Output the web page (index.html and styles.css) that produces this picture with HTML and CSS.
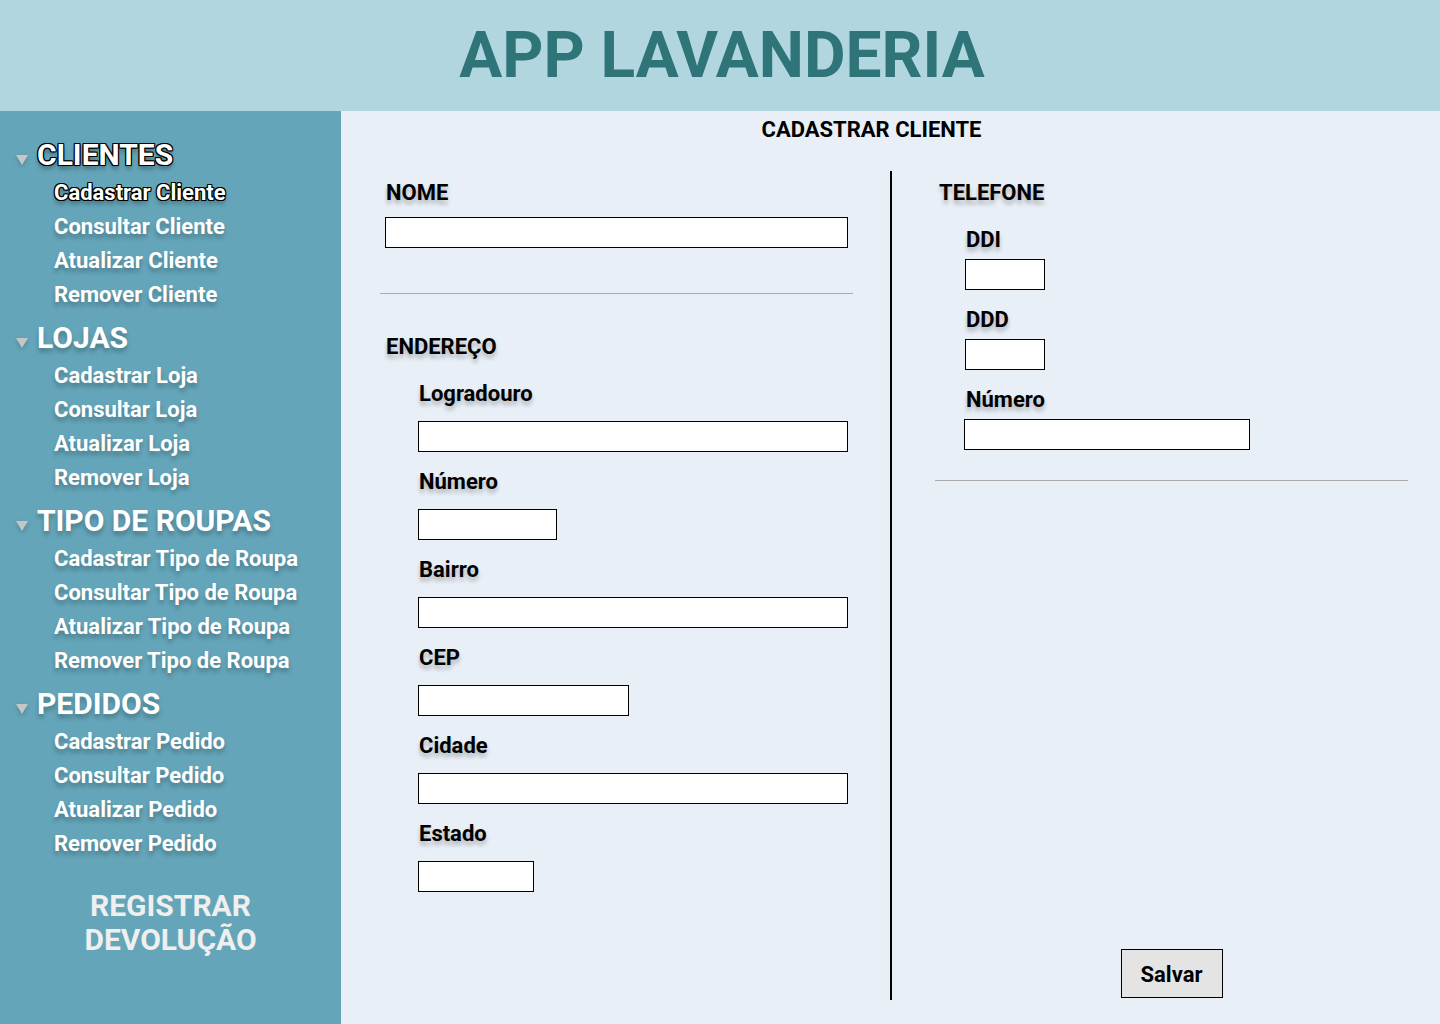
FILE: index.html
```html
<!DOCTYPE html>
<html lang="pt-BR">
<head>
<meta charset="utf-8">
<title>App Lavanderia</title>
<link rel="stylesheet" href="styles.css">
</head>
<body>
<header class="topbar"><h1 class="app-title">APP LAVANDERIA</h1></header>
<div class="layout">
  <nav class="sidebar">
    <section class="group">
      <h2 class="group-title outlined"><span class="tri"></span>CLIENTES</h2>
      <ul class="items">
        <li class="outlined">Cadastrar Cliente</li>
        <li>Consultar Cliente</li>
        <li>Atualizar Cliente</li>
        <li>Remover Cliente</li>
      </ul>
    </section>
    <section class="group">
      <h2 class="group-title"><span class="tri"></span>LOJAS</h2>
      <ul class="items">
        <li>Cadastrar Loja</li>
        <li>Consultar Loja</li>
        <li>Atualizar Loja</li>
        <li>Remover Loja</li>
      </ul>
    </section>
    <section class="group">
      <h2 class="group-title"><span class="tri"></span>TIPO DE ROUPAS</h2>
      <ul class="items">
        <li>Cadastrar Tipo de Roupa</li>
        <li>Consultar Tipo de Roupa</li>
        <li>Atualizar Tipo de Roupa</li>
        <li>Remover Tipo de Roupa</li>
      </ul>
    </section>
    <section class="group">
      <h2 class="group-title"><span class="tri"></span>PEDIDOS</h2>
      <ul class="items">
        <li>Cadastrar Pedido</li>
        <li>Consultar Pedido</li>
        <li>Atualizar Pedido</li>
        <li>Remover Pedido</li>
      </ul>
    </section>
    <div class="devolucao">REGISTRAR<br>DEVOLUÇÃO</div>
  </nav>
  <main class="main">
    <div class="page-title">CADASTRAR CLIENTE</div>
    <div class="columns">
      <div class="col col-left">
        <div class="label sec">NOME</div>
        <input class="box w-nome m13 ml5" type="text">
        <div class="rule r45"></div>
        <div class="label sec s40">ENDEREÇO</div>
        <div class="sub">
          <div class="label f23">Logradouro</div>
          <input class="box w430 m16" type="text">
          <div class="label f17">Número</div>
          <input class="box w139 m16" type="text">
          <div class="label f17">Bairro</div>
          <input class="box w430 m16" type="text">
          <div class="label f17">CEP</div>
          <input class="box w211 m16" type="text">
          <div class="label f17">Cidade</div>
          <input class="box w430 m16" type="text">
          <div class="label f17">Estado</div>
          <input class="box w116 m16" type="text">
        </div>
      </div>
      <div class="vline"></div>
      <div class="col col-right">
        <div class="label tel">TELEFONE</div>
        <div class="label tsub f23">DDI</div>
        <input class="box w80 m8 ml30" type="text">
        <div class="label tsub f17">DDD</div>
        <input class="box w80 m8 ml30" type="text">
        <div class="label tsub f17">Número</div>
        <input class="box w286 m8 ml29" type="text">
        <div class="rule r30"></div>
        <button class="save" type="button">Salvar</button>
      </div>
    </div>
  </main>
</div>
</body>
</html>
```
FILE: styles.css
```css
* { box-sizing: border-box; }
html, body { margin: 0; padding: 0; }
body {
  width: 1440px;
  height: 1024px;
  overflow: hidden;
  font-family: Roboto, "Liberation Sans", Arial, sans-serif;
  background: #e8eff6;
}
.topbar {
  height: 111px;
  background: #b1d6e0;
}
.app-title {
  margin: 0;
  text-align: center;
  font-size: 64px;
  line-height: 111px;
  font-weight: 700;
  color: #2f7479;
  padding-left: 4px;
}
.layout {
  display: flex;
  height: 913px;
}
.sidebar {
  width: 341px;
  flex: none;
  background: #64a5b9;
  padding-top: 26px;
  color: #fff;
}
.group { margin-bottom: 9px; }
.group-title {
  margin: 0;
  display: flex;
  align-items: center;
  padding-left: 16px;
  font-size: 30px;
  line-height: 36px;
  font-weight: 700;
  text-shadow: 0 4px 4px rgba(0,0,0,0.25);
}
.tri {
  width: 0;
  height: 0;
  border-left: 6.5px solid transparent;
  border-right: 6.5px solid transparent;
  border-top: 10px solid #c6c6c6;
  margin-top: 10px;
  margin-right: 9px;
  filter: drop-shadow(0 2px 2px rgba(0,0,0,0.2));
}
.items {
  list-style: none;
  margin: 2px 0 0;
  padding: 0 0 0 54px;
}
.items li {
  font-size: 22px;
  line-height: 32px;
  padding-top: 2px;
  font-weight: 700;
  text-shadow: 0 4px 4px rgba(0,0,0,0.25);
}
.sidebar .outlined {
  text-shadow: -1px -1px 0 #000, 1px -1px 0 #000, -1px 1px 0 #000, 1px 1px 0 #000,
    0 -1px 0 #000, 0 1px 0 #000, -1px 0 0 #000, 1px 0 0 #000,
    0 4px 4px rgba(0,0,0,0.35);
}
.devolucao {
  margin-top: 29px;
  text-align: center;
  font-size: 30px;
  line-height: 34px;
  font-weight: 700;
  color: #efefef;
}
.main {
  flex: 1;
  padding-top: 6px;
  display: flex;
  flex-direction: column;
}
.page-title {
  text-align: center;
  padding-right: 38px;
  font-size: 22px;
  line-height: 22px;
  padding-top: 2px;
  font-weight: 700;
  color: #000;
}
.columns {
  display: flex;
  margin-top: 30px;
  height: 829px;
  padding-left: 39px;
}
.col {
  width: 473px;
  padding-top: 9px;
  display: flex;
  flex-direction: column;
  align-items: flex-start;
}
.vline {
  width: 2px;
  background: #000;
  margin-left: 37px;
}
.col-right { margin-left: 43px; }
.label {
  font-size: 22px;
  line-height: 22px;
  padding-top: 2px;
  font-weight: 700;
  color: #000;
  text-shadow: 0 4px 4px rgba(0,0,0,0.25);
}
.sec { padding-left: 6px; }
.s40 { margin-top: 40px; }
.tel { padding-left: 4px; }
.tsub { padding-left: 31px; }
.f23 { margin-top: 23px; }
.f17 { margin-top: 17px; }
.sub {
  padding-left: 38px;
  display: flex;
  flex-direction: column;
  align-items: flex-start;
}
.sub .label { padding-left: 1px; }
.box {
  display: block;
  height: 31px;
  margin: 0;
  padding: 0;
  border: 1px solid #000;
  background: #fff;
  border-radius: 0;
  font: inherit;
}
.m8 { margin-top: 8px; }
.m13 { margin-top: 13px; }
.m16 { margin-top: 16px; }
.ml5 { margin-left: 5px; }
.ml29 { margin-left: 29px; }
.ml30 { margin-left: 30px; }
.w-nome { width: 463px; }
.w430 { width: 430px; }
.w139 { width: 139px; }
.w211 { width: 211px; }
.w116 { width: 116px; }
.w80 { width: 80px; }
.w286 { width: 286px; }
.rule {
  align-self: stretch;
  height: 1px;
  background: #ababab;
}
.r45 { margin-top: 45px; }
.r30 { margin-top: 30px; }
.save {
  margin-top: auto;
  margin-bottom: 2px;
  align-self: center;
  width: 102px;
  height: 49px;
  border: 1px solid #000;
  background: #e4e4e4;
  border-radius: 0;
  font-family: Roboto, "Liberation Sans", Arial, sans-serif;
  font-size: 22px;
  font-weight: 700;
  color: #000;
  padding: 2px 0 0;
}
```
